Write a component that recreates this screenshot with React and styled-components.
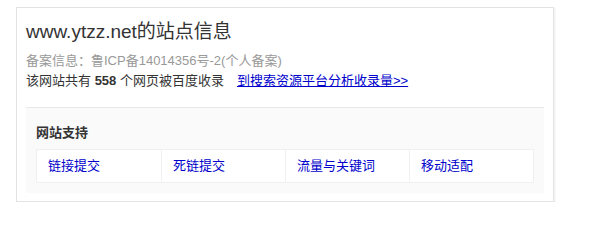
import styled, { createGlobalStyle } from 'styled-components';

const GlobalStyle = createGlobalStyle`
  body {
    margin: 0;
    background: #fff;
    font-family: "Liberation Sans", Arial, "Noto Sans CJK SC", sans-serif;
  }
`;

const Card = styled.div`
  box-sizing: border-box;
  width: 538px;
  margin: 7px 0 0 16px;
  padding: 12px 9px 8px;
  border: 1px solid #e3e3e3;
  box-shadow: 1px 1px 2px rgba(0, 0, 0, 0.08);
  background: #fff;
`;

const Title = styled.h2`
  margin: 0;
  font-size: 19px;
  line-height: 24px;
  font-weight: normal;
  color: #333;
`;

const Line = styled.p`
  margin: ${(p) => (p.$first ? '7px' : '0')} 0 0;
  font-size: 13px;
  line-height: 20px;
  color: ${(p) => (p.$muted ? '#999' : '#333')};
`;

const Count = styled.b`
  color: #333;
`;

const ReportLink = styled.a`
  margin-left: 13px;
  color: #00c;
  text-decoration: underline;
`;

const Support = styled.div`
  margin-top: 16px;
  padding: 15px 10px 10px;
  border-top: 1px solid #e8e8e8;
  background: #fafafa;
`;

const Heading = styled.h3`
  margin: 0;
  font-size: 13px;
  line-height: 20px;
  font-weight: bold;
  color: #333;
`;

const Tools = styled.div`
  display: grid;
  grid-template-columns: repeat(4, 1fr);
  margin-top: 6px;
  border: 1px solid #f0f0f0;
  background: #fff;
`;

const Tool = styled.a`
  display: block;
  padding: 0 11px;
  font-size: 13px;
  line-height: 32px;
  color: #00c;
  text-decoration: none;
  border-left: ${(p) => (p.$first ? 'none' : '1px solid #f0f0f0')};
`;

const tools = ['链接提交', '死链提交', '流量与关键词', '移动适配'];

export default function App() {
  return (
    <>
      <GlobalStyle />
      <Card>
        <Title>www.ytzz.net的站点信息</Title>
        <Line $first $muted>备案信息：鲁ICP备14014356号-2(个人备案)</Line>
        <Line>
          该网站共有 <Count>558</Count> 个网页被百度收录
          <ReportLink href="#">到搜索资源平台分析收录量&gt;&gt;</ReportLink>
        </Line>
        <Support>
          <Heading>网站支持</Heading>
          <Tools>
            {tools.map((t, i) => (
              <Tool key={t} href="#" $first={i === 0}>{t}</Tool>
            ))}
          </Tools>
        </Support>
      </Card>
    </>
  );
}
